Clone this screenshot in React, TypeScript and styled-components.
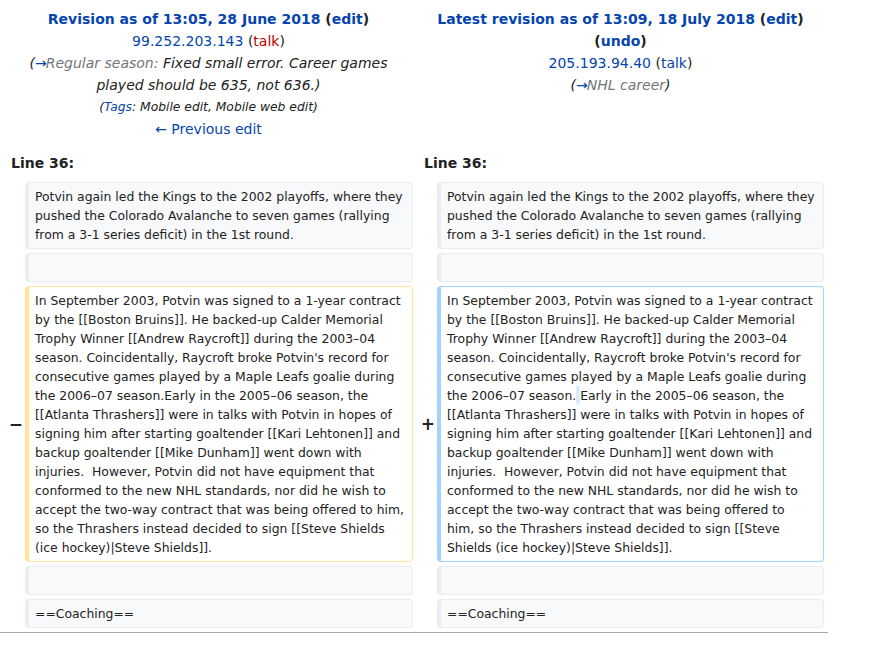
import React from "react";
import styled, { createGlobalStyle, css } from "styled-components";

const GlobalStyle = createGlobalStyle`
  html, body {
    margin: 0;
    padding: 0;
    background: #ffffff;
  }
  body {
    font-family: "DejaVu Sans", "Noto Sans", sans-serif;
    color: #222222;
  }
`;

const DiffGrid = styled.div`
  display: grid;
  grid-template-columns: 17px 388px 16px 387px;
  gap: 4px;
  padding: 4px;
  width: 828px;
  box-sizing: border-box;
  border-bottom: 1px solid #a2a9b1;
`;

const HeaderCell = styled.div`
  grid-column: span 2;
  text-align: center;
  font-size: 14px;
  line-height: 22px;
  padding: 4px 0 8px;
`;

const Title = styled.div`
  font-weight: bold;
`;

const Link = styled.a<{ $red?: boolean }>`
  color: ${(p) => (p.$red ? "#ba0000" : "#0645ad")};
  text-decoration: none;
  cursor: pointer;
`;

const Arrow = styled(Link)`
  letter-spacing: -1px;
`;

const Comment = styled.div`
  font-style: italic;
  padding: 0 8px;
`;

const Autocomment = styled.span`
  color: #72777d;
`;

const Tags = styled.div`
  font-style: italic;
  font-size: 12.3px;
  line-height: 22px;
  height: 22px;
`;

const LineNo = styled.div`
  grid-column: span 2;
  font-weight: bold;
  font-size: 14px;
  line-height: 22px;
  padding: 0 7px 4px;
`;

const Marker = styled.div<{ $shift?: number }>`
  display: flex;
  align-items: center;
  justify-content: flex-end;
  font-weight: bold;
  font-size: 17px;
  color: #222222;
  margin-right: ${(p) => (p.$shift ? `${-p.$shift}px` : "0")};
`;

type Kind = "context" | "deleted" | "added";

const kindStyles: Record<Kind, ReturnType<typeof css>> = {
  context: css`
    background: #f8f9fa;
    border-color: #eaecf0;
  `,
  deleted: css`
    background: #ffffff;
    border-color: #ffe49c;
  `,
  added: css`
    background: #ffffff;
    border-color: #a3d3ff;
  `,
};

const Content = styled.div<{ $kind: Kind; $side: "old" | "new" }>`
  border-style: solid;
  border-width: 1px 1px 1px 4px;
  border-radius: 4px;
  padding: 3.5px ${(p) => (p.$side === "new" ? "7.5px" : "6px")} 4.5px 6px;
  font-size: 12.4px;
  line-height: 19px;
  min-height: 19px;
  white-space: pre-wrap;
  word-wrap: break-word;
  color: #222222;
  ${(p) => kindStyles[p.$kind]}
`;

const Ins = styled.ins`
  background: #d8ecff;
  border-radius: 3px;
  text-decoration: none;
  padding: 2px 0;
`;

const para1 =
  "Potvin again led the Kings to the 2002 playoffs, where they pushed the Colorado Avalanche to seven games (rallying from a 3-1 series deficit) in the 1st round.";

const oldStart =
  "In September 2003, Potvin was signed to a 1-year contract by the [[Boston Bruins]]. He backed-up Calder Memorial Trophy Winner [[Andrew Raycroft]] during the 2003–04 season. Coincidentally, Raycroft broke Potvin's record for consecutive games played by a Maple Leafs goalie during the 2006–07 season.";
const oldEnd =
  "Early in the 2005–06 season, the [[Atlanta Thrashers]] were in talks with Potvin in hopes of signing him after starting goaltender [[Kari Lehtonen]] and backup goaltender [[Mike Dunham]] went down with injuries.  However, Potvin did not have equipment that conformed to the new NHL standards, nor did he wish to accept the two-way contract that was being offered to him, so the Thrashers instead decided to sign [[Steve Shields (ice hockey)|Steve Shields]].";

export default function App() {
  return (
    <>
      <GlobalStyle />
      <DiffGrid>
        <HeaderCell>
          <Title>
            <Link>Revision as of 13:05, 28 June 2018</Link> (<Link>edit</Link>)
          </Title>
          <div>
            <Link>99.252.203.143</Link> (<Link $red>talk</Link>)
          </div>
          <Comment>
            (<Arrow>→</Arrow>
            <Autocomment>Regular season: </Autocomment>Fixed small error. Career games
            played should be 635, not 636.)
          </Comment>
          <Tags>
            (<Link>Tags</Link>: Mobile edit, Mobile web edit)
          </Tags>
          <div>
            <Link>← Previous edit</Link>
          </div>
        </HeaderCell>
        <HeaderCell>
          <Title>
            <Link>Latest revision as of 13:09, 18 July 2018</Link> (<Link>edit</Link>)
          </Title>
          <Title>
            (<Link>undo</Link>)
          </Title>
          <div>
            <Link>205.193.94.40</Link> (<Link>talk</Link>)
          </div>
          <Comment>
            (<Arrow>→</Arrow>
            <Autocomment>NHL career</Autocomment>)
          </Comment>
        </HeaderCell>

        <LineNo>Line 36:</LineNo>
        <LineNo>Line 36:</LineNo>

        <Marker />
        <Content $kind="context" $side="old">{para1}</Content>
        <Marker />
        <Content $kind="context" $side="new">{para1}</Content>

        <Marker />
        <Content $kind="context" $side="old">{""}</Content>
        <Marker />
        <Content $kind="context" $side="new">{""}</Content>

        <Marker $shift={2}>−</Marker>
        <Content $kind="deleted" $side="old">
          {oldStart}
          {oldEnd}
        </Content>
        <Marker $shift={2}>+</Marker>
        <Content $kind="added" $side="new">
          {oldStart}
          <Ins> </Ins>
          {oldEnd}
        </Content>

        <Marker />
        <Content $kind="context" $side="old">{""}</Content>
        <Marker />
        <Content $kind="context" $side="new">{""}</Content>

        <Marker />
        <Content $kind="context" $side="old">==Coaching==</Content>
        <Marker />
        <Content $kind="context" $side="new">==Coaching==</Content>
      </DiffGrid>
    </>
  );
}
